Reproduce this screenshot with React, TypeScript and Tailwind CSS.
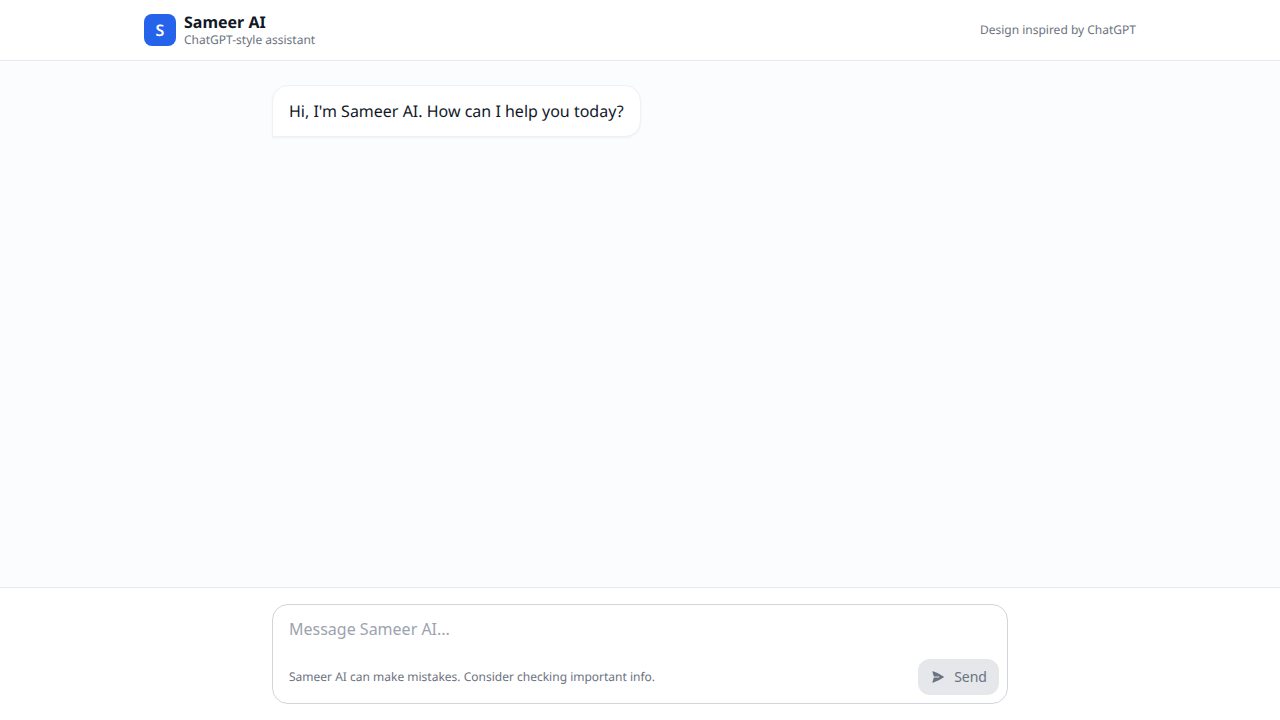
export default function App() {
  return (
    <div className="h-screen flex flex-col bg-[#fafcfe] text-[#111827] font-['Noto_Sans',sans-serif] [text-rendering:geometricPrecision]">
      <header className="h-[61px] shrink-0 bg-white border-b border-[#e5e7eb]">
        <div className="max-w-5xl mx-auto h-full px-4 flex items-center justify-between">
          <div className="flex items-center gap-2">
            <div className="w-8 h-8 rounded-lg bg-[#2563eb] text-white flex items-center justify-center text-base font-semibold">
              S
            </div>
            <div>
              <div className="text-base leading-5 font-bold">Sameer AI</div>
              <div className="text-xs leading-4 text-[#6b7280]">ChatGPT-style assistant</div>
            </div>
          </div>
          <div className="text-xs text-[#6b7280]">Design inspired by ChatGPT</div>
        </div>
      </header>

      <main className="flex-1 overflow-hidden">
        <div className="max-w-3xl mx-auto px-4 pt-6">
          <div className="inline-block px-4 py-3 bg-white border border-[#f0f1f3] rounded-2xl rounded-bl-none shadow-[0_1px_2px_rgba(0,0,0,0.05)] text-base leading-relaxed">
            Hi, I'm Sameer AI. How can I help you today?
          </div>
        </div>
      </main>

      <footer className="shrink-0 bg-white border-t border-[#e5e7eb]">
        <div className="max-w-3xl mx-auto px-4 py-4">
          <div className="h-[100px] border border-[#d1d5db] rounded-2xl bg-white flex flex-col">
            <textarea
              rows={1}
              placeholder="Message Sameer AI..."
              className="flex-1 resize-none outline-none px-4 pt-3 text-base leading-6 placeholder:text-[#9ca3af]"
            />
            <div className="flex items-center justify-between pl-4 pr-2 pb-2">
              <div className="text-xs text-[#6b7280]">
                Sameer AI can make mistakes. Consider checking important info.
              </div>
              <button className="h-9 px-3 flex items-center gap-2 rounded-xl bg-[#e5e7eb] text-[#6b7280] text-sm">
                <svg viewBox="-1.5 -1.5 27 27" fill="currentColor" className="w-4 h-4">
                  <path d="M3.478 2.404a.75.75 0 0 0-.926.941l2.432 7.905H13.5a.75.75 0 0 1 0 1.5H4.984l-2.432 7.905a.75.75 0 0 0 .926.94 60.519 60.519 0 0 0 18.445-8.986.75.75 0 0 0 0-1.218A60.517 60.517 0 0 0 3.478 2.404Z" />
                </svg>
                Send
              </button>
            </div>
          </div>
        </div>
      </footer>
    </div>
  );
}
